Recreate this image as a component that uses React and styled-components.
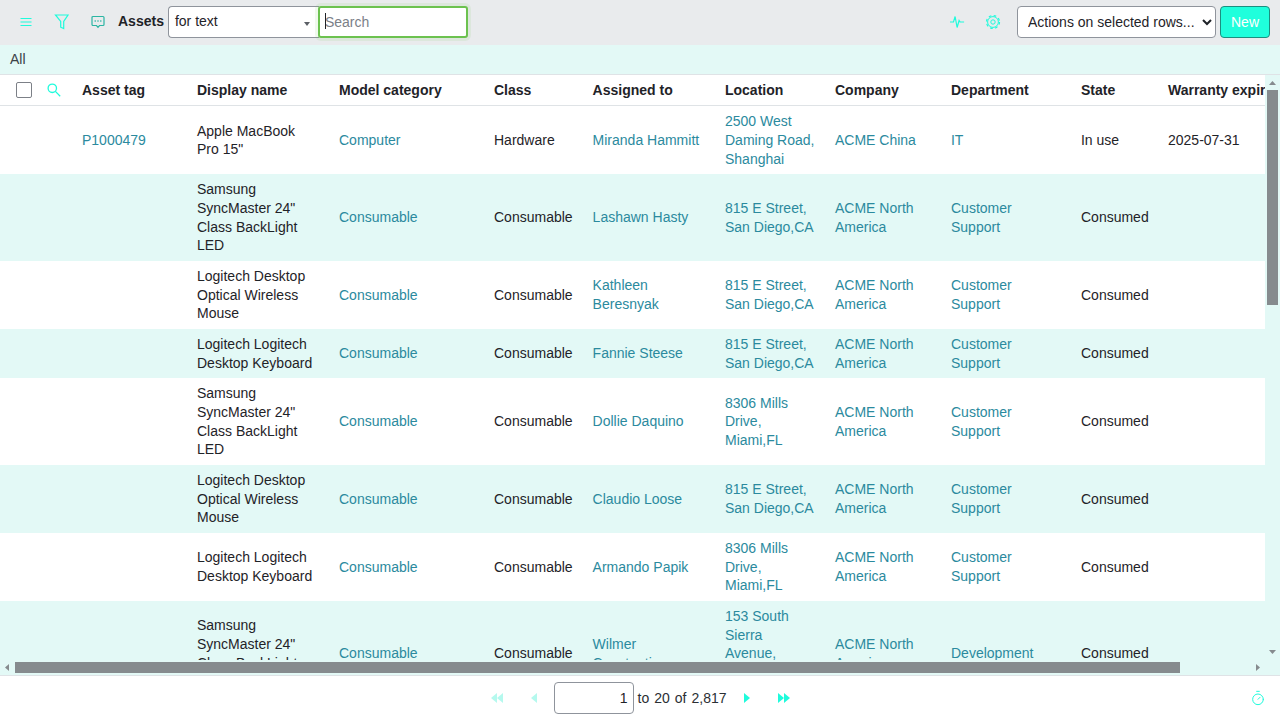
import React from 'react';
import styled, { createGlobalStyle } from 'styled-components';
import { Timer } from 'lucide-react';

const GlobalStyle = createGlobalStyle`
  html, body {
    margin: 0;
    padding: 0;
    background: #ffffff;
    overflow: hidden;
  }
  body {
    font-family: "Liberation Sans", Arial, sans-serif;
    font-size: 14px;
    color: #1f2328;
  }
  * {
    box-sizing: border-box;
  }
`;

const Page = styled.div`
  width: 1280px;
  height: 718px;
  display: flex;
  flex-direction: column;
  overflow: hidden;
`;

const Toolbar = styled.header`
  height: 45px;
  flex: none;
  background: #e9ebed;
  display: flex;
  align-items: flex-start;
  padding: 6px 10px 0 8px;
`;

const IconButton = styled.span`
  width: 36px;
  height: 32px;
  flex: none;
  display: flex;
  align-items: center;
  justify-content: center;
  color: ${(p) => p.$color || '#1ffbdc'};
`;

const Title = styled.span`
  font-weight: 700;
  line-height: 31px;
  margin: 0 4px 0 2px;
`;

const SearchGroup = styled.div`
  display: flex;
  height: 32px;
`;

const ForText = styled.div`
  position: relative;
  width: 151px;
  height: 32px;
  background: #ffffff;
  border: 1px solid #8f949c;
  border-right: none;
  border-radius: 4px 0 0 4px;
  padding: 4px 6px;
  line-height: 20px;
  &::after {
    content: '';
    position: absolute;
    right: 9px;
    top: 15px;
    border: 3px solid transparent;
    border-top: 4px solid #5c6066;
    border-bottom: none;
  }
`;

const SearchWrap = styled.div`
  position: relative;
  width: 150px;
  height: 32px;
  margin-left: -1px;
  border: 2px solid #6cc24f;
  border-radius: 3px;
  box-shadow: 0 0 0 3px rgba(108, 194, 79, 0.1);
  background: #ffffff;
  display: flex;
  align-items: center;
`;

const SearchInput = styled.input`
  width: 100%;
  height: 100%;
  border: none;
  outline: none;
  background: none;
  padding: 0 0 0 5px;
  font: inherit;
  &::placeholder {
    color: #7b8088;
    opacity: 1;
  }
`;

const Caret = styled.span`
  position: absolute;
  left: 5px;
  top: 5px;
  width: 1px;
  height: 16px;
  background: #1f2328;
`;

const Spacer = styled.div`
  flex: 1;
`;

const ActionSelect = styled.select`
  width: 199px;
  height: 32px;
  margin: 0 4px 0 6px;
  padding: 0 0 0 6px;
  background: #ffffff;
  border: 1px solid #8f949c;
  border-radius: 4px;
  font: inherit;
  color: #1f2328;
`;

const NewButton = styled.button`
  width: 50px;
  height: 32px;
  background: #1fffdc;
  color: #ffffff;
  border: 1px solid #1c8f80;
  border-radius: 4px;
  font: inherit;
  padding: 0;
`;

const ListHeader = styled.div`
  height: 30px;
  flex: none;
  background: #e3f9f6;
  border-bottom: 1px solid #dfe3e6;
  padding: 0 10px;
  line-height: 29px;
  color: #3c4147;
`;

const TableArea = styled.div`
  position: relative;
  flex: 1;
  min-height: 0;
  overflow: hidden;
  border-bottom: 1px solid #dfe3e6;
`;

const Table = styled.table`
  table-layout: fixed;
  width: 1300px;
  border-collapse: collapse;
`;

const Head = styled.th`
  height: 30.85px;
  padding: 0 8px;
  text-align: left;
  font-weight: 700;
  white-space: nowrap;
  overflow: hidden;
  border-bottom: 1px solid #dfe3e6;
  background: #ffffff;
  line-height: 18.67px;
`;

const Row = styled.tr`
  background: ${(p) => (p.$alt ? '#e3f9f6' : '#ffffff')};
`;

const Cell = styled.td`
  padding: 6px 12px 6px 8px;
  line-height: 18.67px;
  vertical-align: middle;
  color: ${(p) => (p.$link ? '#2b8a9e' : 'inherit')};
`;

const Check = styled.span`
  display: block;
  width: 16px;
  height: 16px;
  margin-left: 8px;
  border: 1px solid #7c8087;
  border-radius: 2px;
  background: #ffffff;
`;

const HeadIcon = styled.span`
  display: flex;
  color: #1ffbdc;
`;

// scrollbars sit on top of the table
const VTrack = styled.div`
  position: absolute;
  top: 0;
  right: 0;
  bottom: 0;
  width: 15px;
  background: #e3f9f6;
`;

const HTrack = styled.div`
  position: absolute;
  left: 0;
  right: 0;
  bottom: 0;
  height: 15px;
  background: #e3f9f6;
`;

const VThumb = styled.div`
  position: absolute;
  top: 15px;
  left: 2px;
  width: 11px;
  height: 215px;
  background: #868b8e;
`;

const HThumb = styled.div`
  position: absolute;
  left: 15px;
  top: 2px;
  width: 1165px;
  height: 11px;
  background: #868b8e;
`;

const ArrowUp = styled.span`
  position: absolute;
  top: 6px;
  left: 4px;
  width: 7px;
  height: 4px;
  background: #868b8e;
  clip-path: polygon(50% 0, 100% 100%, 0 100%);
`;

const ArrowDown = styled.span`
  position: absolute;
  bottom: 21px;
  left: 4px;
  width: 7px;
  height: 4px;
  background: #868b8e;
  clip-path: polygon(0 0, 100% 0, 50% 100%);
`;

const ArrowLeft = styled.span`
  position: absolute;
  top: 4px;
  left: 5px;
  width: 4px;
  height: 7px;
  background: #868b8e;
  clip-path: polygon(100% 0, 100% 100%, 0 50%);
`;

const ArrowRight = styled.span`
  position: absolute;
  top: 4px;
  right: 20px;
  width: 4px;
  height: 7px;
  background: #868b8e;
  clip-path: polygon(0 0, 100% 50%, 0 100%);
`;

const Footer = styled.footer`
  position: relative;
  height: 42px;
  flex: none;
  display: flex;
  align-items: center;
  justify-content: center;
  padding-top: 2px;
`;

const Pager = styled.div`
  display: flex;
  align-items: center;
  gap: 4px;
  color: #2b2f34;
`;

const PagerNav = styled.div`
  display: flex;
  gap: 5px;
`;

const PagerIcon = styled.span`
  width: 32px;
  display: flex;
  justify-content: center;
  color: ${(p) => (p.$off ? '#b5f9ee' : '#1ffbdc')};
`;

const PagerText = styled.div`
  display: flex;
  gap: 5px;
`;

const PageInput = styled.input`
  width: 80px;
  height: 32px;
  text-align: right;
  border: 1px solid #8f949c;
  border-radius: 4px;
  font: inherit;
  color: #1f2328;
  padding: 0 5px;
`;

const TimerSlot = styled.span`
  position: absolute;
  right: 14px;
  top: 14px;
  display: flex;
  color: #1ffbdc;
`;

const MenuIcon = () => (
  <svg width="14" height="14" viewBox="0 0 14 14" fill="none" stroke="currentColor" strokeWidth="1.2">
    <path d="M1.5 3.5h11M1.5 7h11M1.5 10.5h11" />
  </svg>
);

const FunnelIcon = () => (
  <svg width="16" height="16" viewBox="0 0 16 16" fill="none" stroke="currentColor" strokeWidth="1.2">
    <path d="M1.5 1h12.5L9.7 7.4v7.2l-3-1.4v-5.8z" />
  </svg>
);

const ChatIcon = () => (
  <svg width="14" height="14" viewBox="0 0 14 14" fill="none" stroke="currentColor" strokeWidth="1.2">
    <path d="M2 1.5h10a1 1 0 0 1 1 1v7a1 1 0 0 1-1 1H8.5L7 12.3 5.5 10.5H2a1 1 0 0 1-1-1v-7a1 1 0 0 1 1-1z" />
    <path d="M3.6 6h1.2M6.4 6h1.2M9.2 6h1.2" strokeWidth="1.6" />
  </svg>
);

const PulseIcon = () => (
  <svg width="16" height="16" viewBox="0 0 16 16" fill="none" stroke="currentColor" strokeWidth="1.2">
    <path d="M1 8h3.5l1.6 -5.5 2 11 2 -7 1 1.5h4" />
  </svg>
);

const GearIcon = () => (
  <svg width="16" height="16" viewBox="0 0 16 16" fill="none" stroke="currentColor">
    <circle cx="8" cy="8" r="5.4" strokeWidth="1" />
    <circle cx="8" cy="8" r="6.5" strokeWidth="1.2" strokeDasharray="2.6 2.5" />
    <circle cx="8" cy="8" r="2.2" strokeWidth="1" />
  </svg>
);

const SearchIcon = () => (
  <svg width="14" height="14" viewBox="0 0 14 14" fill="none" stroke="currentColor" strokeWidth="1.3">
    <circle cx="5.3" cy="5.3" r="4.2" />
    <path d="M8.4 8.4l4.8 4.8" />
  </svg>
);

const Chevrons = ({ dir, double }) => (
  <svg width={double ? 12 : 6} height="10" viewBox={double ? '0 0 12 10' : '0 0 6 10'} fill="currentColor">
    {dir === 'right' ? (
      <>
        <path d="M0 0l6 5-6 5z" />
        {double && <path d="M6 0l6 5-6 5z" />}
      </>
    ) : (
      <>
        <path d="M6 0L0 5l6 5z" />
        {double && <path d="M12 0L6 5l6 5z" />}
      </>
    )}
  </svg>
);

const widths = [39, 35, 115, 142, 155, 98.6, 132.4, 110, 116, 130, 87, 140];
const headers = ['Asset tag', 'Display name', 'Model category', 'Class', 'Assigned to', 'Location', 'Company', 'Department', 'State', 'Warranty expiration'];

const rows = [
  ['P1000479', 'Apple MacBook Pro 15"', 'Computer', 'Hardware', 'Miranda Hammitt', '2500 West Daming Road, Shanghai', 'ACME China', 'IT', 'In use', '2025-07-31'],
  ['', 'Samsung SyncMaster 24" Class BackLight LED', 'Consumable', 'Consumable', 'Lashawn Hasty', '815 E Street, San Diego,CA', 'ACME North America', 'Customer Support', 'Consumed', ''],
  ['', 'Logitech Desktop Optical Wireless Mouse', 'Consumable', 'Consumable', 'Kathleen Beresnyak', '815 E Street, San Diego,CA', 'ACME North America', 'Customer Support', 'Consumed', ''],
  ['', 'Logitech Logitech Desktop Keyboard', 'Consumable', 'Consumable', 'Fannie Steese', '815 E Street, San Diego,CA', 'ACME North America', 'Customer Support', 'Consumed', ''],
  ['', 'Samsung SyncMaster 24" Class BackLight LED', 'Consumable', 'Consumable', 'Dollie Daquino', '8306 Mills Drive, Miami,FL', 'ACME North America', 'Customer Support', 'Consumed', ''],
  ['', 'Logitech Desktop Optical Wireless Mouse', 'Consumable', 'Consumable', 'Claudio Loose', '815 E Street, San Diego,CA', 'ACME North America', 'Customer Support', 'Consumed', ''],
  ['', 'Logitech Logitech Desktop Keyboard', 'Consumable', 'Consumable', 'Armando Papik', '8306 Mills Drive, Miami,FL', 'ACME North America', 'Customer Support', 'Consumed', ''],
  ['', 'Samsung SyncMaster 24" Class BackLight LED', 'Consumable', 'Consumable', 'Wilmer Constantino', '153 South Sierra Avenue, Solana Beach,CA', 'ACME North America', 'Development', 'Consumed', ''],
];

// columns that render as links
const linkCols = [0, 2, 4, 5, 6, 7];

const App = () => (
  <>
    <GlobalStyle />
    <Page>
      <Toolbar>
        <IconButton><MenuIcon /></IconButton>
        <IconButton><FunnelIcon /></IconButton>
        <IconButton $color="#2bb5a3"><ChatIcon /></IconButton>
        <Title>Assets</Title>
        <SearchGroup>
          <ForText>for text</ForText>
          <SearchWrap>
            <SearchInput placeholder="Search" />
            <Caret />
          </SearchWrap>
        </SearchGroup>
        <Spacer />
        <IconButton><PulseIcon /></IconButton>
        <IconButton><GearIcon /></IconButton>
        <ActionSelect defaultValue="actions">
          <option value="actions">Actions on selected rows...</option>
        </ActionSelect>
        <NewButton>New</NewButton>
      </Toolbar>
      <ListHeader>All</ListHeader>
      <TableArea>
        <Table>
          <colgroup>
            {widths.map((w, i) => (
              <col key={i} style={{ width: w }} />
            ))}
          </colgroup>
          <thead>
            <tr>
              <Head><Check /></Head>
              <Head><HeadIcon><SearchIcon /></HeadIcon></Head>
              {headers.map((h) => (
                <Head key={h}>{h}</Head>
              ))}
            </tr>
          </thead>
          <tbody>
            {rows.map((row, r) => (
              <Row key={r} $alt={r % 2 === 1}>
                <Cell />
                <Cell />
                {row.map((value, c) => (
                  <Cell key={c} $link={linkCols.includes(c)}>{value}</Cell>
                ))}
              </Row>
            ))}
          </tbody>
        </Table>
        <VTrack>
          <ArrowUp />
          <VThumb />
          <ArrowDown />
        </VTrack>
        <HTrack>
          <ArrowLeft />
          <HThumb />
          <ArrowRight />
        </HTrack>
      </TableArea>
      <Footer>
        <Pager>
          <PagerNav>
            <PagerIcon $off><Chevrons dir="left" double /></PagerIcon>
            <PagerIcon $off><Chevrons dir="left" /></PagerIcon>
          </PagerNav>
          <PageInput defaultValue="1" />
          <PagerText>
            <span>to</span>
            <span>20</span>
            <span>of</span>
            <span>2,817</span>
          </PagerText>
          <PagerNav>
            <PagerIcon><Chevrons dir="right" /></PagerIcon>
            <PagerIcon><Chevrons dir="right" double /></PagerIcon>
          </PagerNav>
        </Pager>
        <TimerSlot><Timer size={16} strokeWidth={1.5} /></TimerSlot>
      </Footer>
    </Page>
  </>
);

export default App;
